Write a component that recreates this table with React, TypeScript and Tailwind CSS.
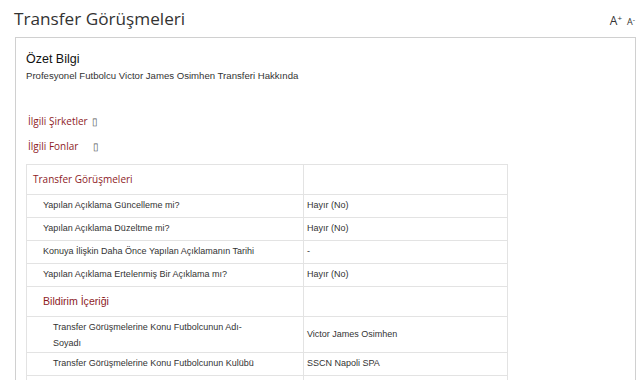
import React from "react";

const red = "text-[#8e1b1f]";

function Row({ label, value, indent = 0, h = "h-[23px]" }: { label: React.ReactNode; value?: string; indent?: number; h?: string }) {
  const pad = indent === 0 ? "pl-[6px]" : indent === 1 ? "pl-[16px]" : "pl-[26px]";
  return (
    <tr className={h}>
      <td className={`border border-[#e3e3e3] ${pad} pr-2 align-middle`}>
        {label}
      </td>
      <td className="border border-[#e3e3e3] pl-[3px] align-middle text-[9px] text-[#333]">{value}</td>
    </tr>
  );
}

export default function App() {
  const sans = { fontFamily: "'Liberation Sans', Arial, sans-serif" } as React.CSSProperties;
  const open = { fontFamily: "'Open Sans', 'Noto Sans', sans-serif" } as React.CSSProperties;
  return (
    <div className="w-[641px] h-[380px] overflow-hidden bg-white" style={sans}>
      <div className="flex items-end justify-between pl-[14px] pr-[6px] pt-[6px]">
        <h1 className="text-[17.2px] leading-[26px] text-[#333]" style={open}>Transfer Görüşmeleri</h1>
        <div className="flex items-baseline gap-[5px] pb-[2px] text-[#333]" style={open}>
          <span className="text-[12px]">A<sup className="text-[8px]">+</sup></span>
          <span className="text-[9px]">A<sup className="text-[7px]">-</sup></span>
        </div>
      </div>
      <div className="mt-[5px] ml-[15px] w-[621px] h-[400px] border border-[#d0d0d0] pl-[10px] pt-[14px]">
        <div className="text-[12.5px] leading-[15px] text-[#111]">Özet Bilgi</div>
        <div className="mt-[3px] text-[9.6px] leading-[11px] text-[#333]">Profesyonel Futbolcu Victor James Osimhen Transferi Hakkında</div>
        <div className={`mt-[33px] ml-[2px] text-[10px] leading-[14px] font-medium ${red}`} style={open}>
          İlgili Şirketler <span className="ml-[2px] font-normal text-[#555]">▯</span>
        </div>
        <div className={`mt-[11px] ml-[2px] text-[10px] leading-[14px] font-medium ${red}`} style={open}>
          İlgili Fonlar <span className="ml-[12px] font-normal text-[#555]">▯</span>
        </div>
        <table className="mt-[11px] w-[482px] border-collapse text-[9px] text-[#333]">
          <colgroup>
            <col className="w-[277px]" />
            <col />
          </colgroup>
          <tbody>
            <Row h="h-[30px]" label={<span className={`text-[10px] font-medium ${red}`} style={open}>Transfer Görüşmeleri</span>} />
            <Row indent={1} label="Yapılan Açıklama Güncelleme mi?" value="Hayır (No)" />
            <Row indent={1} label="Yapılan Açıklama Düzeltme mi?" value="Hayır (No)" />
            <Row indent={1} label="Konuya İlişkin Daha Önce Yapılan Açıklamanın Tarihi" value="-" />
            <Row indent={1} label="Yapılan Açıklama Ertelenmiş Bir Açıklama mı?" value="Hayır (No)" />
            <Row h="h-[30px]" indent={1} label={<span className={`text-[10.6px] ${red}`}>Bildirim İçeriği</span>} />
            <Row h="h-[36px]" indent={2} label={<span className="block leading-[16px] w-[200px]">Transfer Görüşmelerine Konu Futbolcunun Adı-Soyadı</span>} value="Victor James Osimhen" />
            <Row indent={2} label="Transfer Görüşmelerine Konu Futbolcunun Kulübü" value="SSCN Napoli SPA" />
            <Row indent={2} label="Transfer Görüşmelerinin Süresi" value="" />
          </tbody>
        </table>
      </div>
    </div>
  );
}
